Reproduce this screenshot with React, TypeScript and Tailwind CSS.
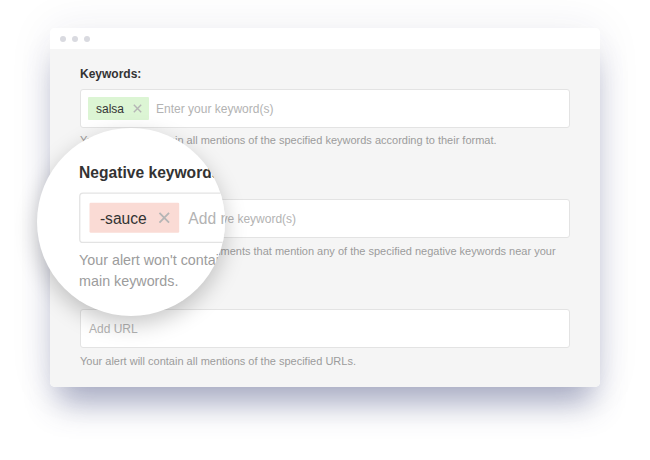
function Tag({ label, tone }: { label: string; tone: "green" | "red" }) {
  return (
    <span
      className={
        "flex h-[23px] shrink-0 items-center gap-[9px] rounded-[1px] pl-[8px] pr-[7px] text-[12px] text-[#333] " +
        (tone === "green" ? "bg-[#dcf5d4]" : "bg-[#fadbd5]")
      }
    >
      {label}
      <svg width="9" height="9" viewBox="0 0 9 9" className="text-[#b5b5b5]">
        <path d="M0.8 0.8 L8.2 8.2 M8.2 0.8 L0.8 8.2" stroke="currentColor" strokeWidth="1.4" />
      </svg>
    </span>
  );
}

function Field({ tag, tone, placeholder }: { tag?: string; tone?: "green" | "red"; placeholder: string }) {
  return (
    <div className="flex h-[39px] items-center gap-[7px] rounded-[3px] border border-[#e3e3e3] bg-white px-[7px]">
      {tag && tone && <Tag label={tag} tone={tone} />}
      <span className={"text-[12px] text-[#b3b3b3] " + (tag ? "" : "pl-[1px]")}>{placeholder}</span>
    </div>
  );
}

// the form body, rendered once normally and once inside the magnifier
function Form() {
  return (
    <div className="flex flex-col px-[30px] pt-[17px] pb-[18px]">
      <div className="text-[12px] font-bold leading-[16px] text-[#333]">Keywords:</div>
      <div className="mt-[7px]">
        <Field tag="salsa" tone="green" placeholder="Enter your keyword(s)" />
      </div>
      <p className="mt-[4px] text-[11px] leading-[16px] text-[#9c9c9c]">
        Your alert will contain all mentions of the specified keywords according to their format.
      </p>

      <div className="mt-[28px] text-[12px] font-bold leading-[16px] text-[#333]">Negative keywords:</div>
      <div className="mt-[7px]">
        <Field tag="-sauce" tone="red" placeholder="Add negative keyword(s)" />
      </div>
      <p className="mt-[5px] pr-[10px] text-[11px] leading-[16px] text-[#9c9c9c]">
        Your alert won't contain documents that mention any of the specified negative keywords near your main keywords.
      </p>

      <div className="mt-[34px]">
        <Field placeholder="Add URL" />
      </div>
      <p className="mt-[5px] text-[11px] leading-[16px] text-[#9c9c9c]">
        Your alert will contain all mentions of the specified URLs.
      </p>
    </div>
  );
}

export default function App() {
  return (
    <div className="h-[460px] w-[650px] overflow-hidden bg-white pl-[50px] pt-[28px] font-['Liberation_Sans',Arial,sans-serif]">
      <div className="relative w-[550px] rounded-[5px] shadow-[0_0_45px_rgba(40,40,90,0.08),0_24px_30px_-8px_rgba(70,80,130,0.45)]">
        {/* Title bar */}
        <div className="flex h-[21px] items-center gap-[6px] rounded-t-[5px] bg-white pl-[10px]">
          <span className="h-[6px] w-[6px] rounded-full bg-[#d9dae0]" />
          <span className="h-[6px] w-[6px] rounded-full bg-[#d9dae0]" />
          <span className="h-[6px] w-[6px] rounded-full bg-[#d9dae0]" />
        </div>

        <div className="relative rounded-b-[5px] bg-[#f5f5f5]">
          <Form />

          {/* Magnifier */}
          <div className="absolute left-[-13px] top-[79px] h-[188px] w-[188px] overflow-hidden rounded-full bg-white shadow-[0_8px_22px_rgba(0,0,0,0.22)]">
            <div className="absolute left-[13px] top-[-79px] w-[550px] origin-[33px_172px] scale-[1.3]">
              <Form />
            </div>
          </div>
        </div>
      </div>
    </div>
  );
}
